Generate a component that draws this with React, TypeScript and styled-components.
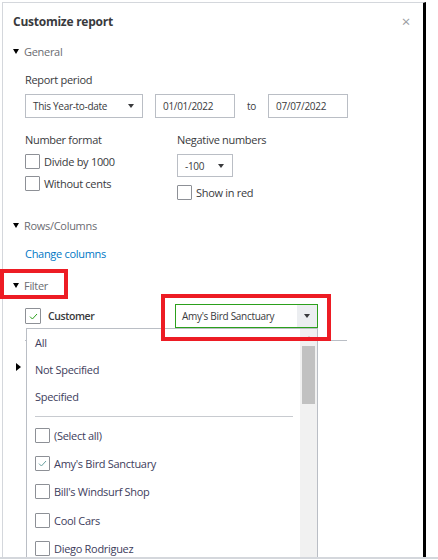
import styled, { createGlobalStyle, css } from 'styled-components'

const GlobalStyle = createGlobalStyle`
  html, body {
    margin: 0;
    padding: 0;
    background: #fff;
  }
  body {
    font-family: "Open Sans", "Liberation Sans", sans-serif;
    color: #393a3d;
    letter-spacing: -0.3px;
  }
`

const Frame = styled.div`
  width: 438px;
  height: 559px;
  box-sizing: border-box;
  border-bottom: 2px solid #d4d7dc;
  overflow: hidden;
  position: relative;
`

const Panel = styled.div`
  margin: 2px 0 0 2px;
  width: 424px;
  height: 560px;
  box-sizing: border-box;
  border-top: 1px solid #d4d7dc;
  border-left: 1px solid #d4d7dc;
  border-right: 3px solid #000;
  padding: 8px 0 0 10px;
`

const TitleRow = styled.div`
  display: flex;
  align-items: center;
  justify-content: space-between;
  height: 20px;
  padding-right: 13px;
`

const Title = styled.h2`
  margin: 0;
  font-size: 12px;
  font-weight: 700;
  letter-spacing: -0.25px;
  color: #393a3d;
`

const Close = styled.span`
  font-size: 15px;
  color: #9a9ca1;
  line-height: 1;
`

const Heading = styled.div<{ $open?: boolean; $mark?: boolean; $top: number }>`
  position: relative;
  display: flex;
  align-items: center;
  gap: 5px;
  height: 16px;
  margin-top: ${(p) => p.$top}px;
  font-size: 11px;
  color: #6b6c72;

  &::before {
    content: '';
    width: 0;
    height: 0;
    ${(p) =>
      p.$open
        ? css`
            border-left: 3.5px solid transparent;
            border-right: 3.5px solid transparent;
            border-top: 5px solid #000;
          `
        : css`
            margin-left: 3px;
            border-top: 4px solid transparent;
            border-bottom: 4px solid transparent;
            border-left: 5px solid #000;
          `}
  }

  ${(p) =>
    p.$mark &&
    css`
      &::after {
        content: '';
        position: absolute;
        left: -13px;
        top: -8px;
        width: 68px;
        height: 30px;
        box-sizing: border-box;
        border: 4px solid #ed1c24;
      }
    `}
`

const Body = styled.div`
  padding-left: 12px;
`

const Label = styled.div<{ $top: number }>`
  margin-top: ${(p) => p.$top}px;
  height: 16px;
  line-height: 16px;
  font-size: 11px;
  color: #393a3d;
`

const FieldRow = styled.div`
  display: flex;
  align-items: center;
  margin-top: 6px;
`

const Box = styled.div<{ $w: number; $h?: number }>`
  box-sizing: border-box;
  width: ${(p) => p.$w}px;
  height: ${(p) => p.$h ?? 24}px;
  border: 1px solid #babec5;
  display: flex;
  align-items: center;
  justify-content: space-between;
  padding: 0 8px 0 7px;
  font-size: 10px;
  color: #393a3d;
`

const Caret = styled.span`
  width: 0;
  height: 0;
  border-left: 3.5px solid transparent;
  border-right: 3.5px solid transparent;
  border-top: 4px solid #393a3d;
`

const To = styled.span`
  font-size: 10px;
  margin: 0 12px;
`

const Columns = styled.div`
  display: grid;
  grid-template-columns: 152px 1fr;
  margin-top: 14px;
`

const Col = styled.div`
  display: flex;
  flex-direction: column;
`

const Check = styled.label<{ $top: number }>`
  display: flex;
  align-items: center;
  gap: 4px;
  margin-top: ${(p) => p.$top}px;
  font-size: 11px;
  color: #393a3d;
  height: 15px;
`

const Tick = styled.span<{ $size?: number }>`
  box-sizing: border-box;
  width: ${(p) => p.$size ?? 15}px;
  height: ${(p) => p.$size ?? 15}px;
  border: 1px solid #8d9096;
  border-radius: 1px;
  display: flex;
  align-items: center;
  justify-content: center;
  flex-shrink: 0;
`

const Link = styled.a`
  display: block;
  margin-top: 13px;
  height: 16px;
  line-height: 16px;
  font-size: 11px;
  color: #0077c5;
  text-decoration: none;
`

const FilterRow = styled.div`
  position: relative;
  width: 322px;
  margin-top: 11px;
  padding-bottom: 12px;
  border-bottom: 1px solid #babec5;
`

const CustomerRow = styled.div`
  display: flex;
  align-items: center;
  height: 24px;
`

const CustomerCheck = styled.div`
  display: flex;
  align-items: center;
  gap: 7px;
  width: 150px;
  font-size: 10.5px;
  font-weight: 600;
  letter-spacing: -0.4px;
`

const Select = styled.div<{ $mark?: boolean }>`
  position: relative;
  box-sizing: border-box;
  width: 143px;
  height: 24px;
  border: 1px solid #2ca01c;
  display: flex;
  align-items: stretch;
  font-size: 10px;
  color: #393a3d;

  ${(p) =>
    p.$mark &&
    css`
      &::after {
        content: '';
        position: absolute;
        left: -15px;
        top: -11px;
        width: 170px;
        height: 47px;
        box-sizing: border-box;
        border: 4px solid #ed1c24;
        z-index: 3;
      }
    `}
`

const SelectText = styled.span`
  flex: 1;
  display: flex;
  align-items: center;
  padding-left: 6px;
`

const SelectButton = styled.span`
  width: 20px;
  background: #eceef1;
  display: flex;
  align-items: center;
  justify-content: center;
`

const Dropdown = styled.div`
  position: absolute;
  left: 1px;
  top: 24px;
  width: 292px;
  height: 240px;
  box-sizing: border-box;
  background: #fff;
  border: 1px solid #babec5;
  display: flex;
  z-index: 2;
`

const List = styled.div`
  flex: 1;
  padding: 0 7px 0 8px;
`

const Option = styled.div<{ $h: number }>`
  display: flex;
  align-items: center;
  gap: 4px;
  height: ${(p) => p.$h}px;
  font-size: 11px;
  color: #3d3d5c;
`

const Divider = styled.div`
  height: 1px;
  background: #c8cbd0;
  margin: 7px 0 4px;
`

const Scrollbar = styled.div`
  width: 17px;
  background: #f1f1f1;
  position: relative;
  padding: 17px 2px 0;
  box-sizing: border-box;
`

const Thumb = styled.div`
  height: 58px;
  background: #c1c1c1;
`

const ScrollArrow = styled.span`
  position: absolute;
  top: 7px;
  left: 7px;
  width: 0;
  height: 0;
  border-left: 2px solid transparent;
  border-right: 2px solid transparent;
  border-bottom: 3px solid #a3a3a3;
`

function CheckMark({ color = '#2ca01c' }: { color?: string }) {
  return (
    <svg width="9" height="7" viewBox="0 0 9 7">
      <path d="M1 3.6 L3.4 6 L8 1" fill="none" stroke={color} strokeWidth="1" />
    </svg>
  )
}

const customers = [
  { name: '(Select all)', checked: false },
  { name: "Amy's Bird Sanctuary", checked: true },
  { name: "Bill's Windsurf Shop", checked: false },
  { name: 'Cool Cars', checked: false },
  { name: 'Diego Rodriguez', checked: false },
  { name: 'Dukes Basketball Camp', checked: false },
]

export default function App() {
  return (
    <>
      <GlobalStyle />
      <Frame>
        <Panel>
          <TitleRow>
            <Title>Customize report</Title>
            <Close>×</Close>
          </TitleRow>

          <Heading $open $top={12}>General</Heading>
          <Body>
            <Label $top={13}>Report period</Label>
            <FieldRow>
              <Box $w={118}>
                This Year-to-date <Caret />
              </Box>
              <Box $w={80} style={{ marginLeft: 12 }}>
                01/01/2022
              </Box>
              <To>to</To>
              <Box $w={80}>07/07/2022</Box>
            </FieldRow>

            <Columns>
              <Col>
                <Label $top={0}>Number format</Label>
                <Check $top={6}>
                  <Tick />
                  Divide by 1000
                </Check>
                <Check $top={7}>
                  <Tick />
                  Without cents
                </Check>
              </Col>
              <Col>
                <Label $top={0}>Negative numbers</Label>
                <Box $w={56} $h={23} style={{ marginTop: 6 }}>
                  -100 <Caret />
                </Box>
                <Check $top={8}>
                  <Tick />
                  Show in red
                </Check>
              </Col>
            </Columns>
          </Body>

          <Heading $open $top={17}>Rows/Columns</Heading>
          <Body>
            <Link href="#">Change columns</Link>
          </Body>

          <Heading $open $mark $top={15}>Filter</Heading>
          <Body>
            <FilterRow>
              <CustomerRow>
                <CustomerCheck>
                  <Tick $size={16}>
                    <CheckMark />
                  </Tick>
                  Customer
                </CustomerCheck>
                <Select $mark>
                  <SelectText>Amy's Bird Sanctuary</SelectText>
                  <SelectButton>
                    <Caret />
                  </SelectButton>
                </Select>
              </CustomerRow>
              <Dropdown>
                <List>
                  <Option $h={27}>All</Option>
                  <Option $h={27}>Not Specified</Option>
                  <Option $h={26}>Specified</Option>
                  <Divider />
                  {customers.map((c) => (
                    <Option key={c.name} $h={28.3}>
                      <Tick>{c.checked && <CheckMark color="#6aa0a0" />}</Tick>
                      {c.name}
                    </Option>
                  ))}
                </List>
                <Scrollbar>
                  <ScrollArrow />
                  <Thumb />
                </Scrollbar>
              </Dropdown>
            </FilterRow>
          </Body>

          <Heading $top={18}>Header/footer</Heading>
        </Panel>
      </Frame>
    </>
  )
}
